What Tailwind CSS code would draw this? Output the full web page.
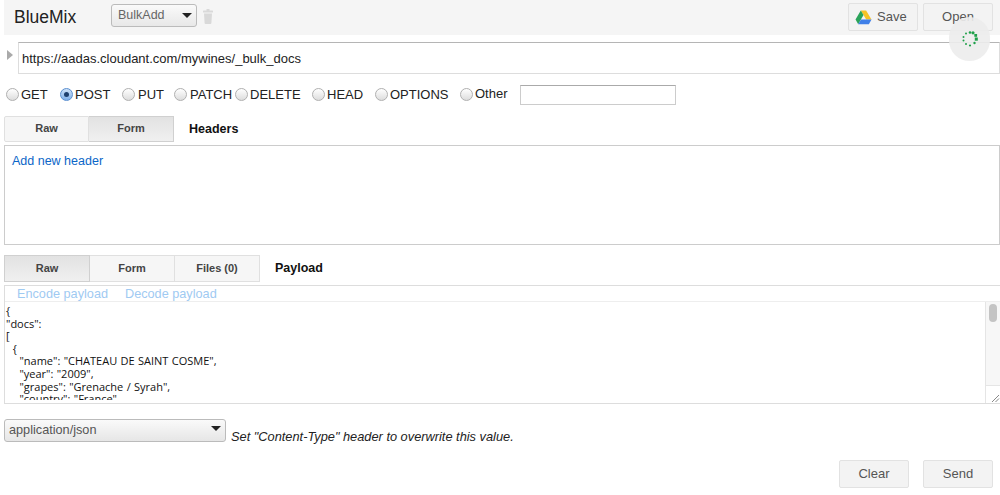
<!DOCTYPE html>
<html lang="en">
<head>
    <meta charset="UTF-8">
    <meta name="viewport" content="width=device-width, initial-scale=1.0">
    <title>BlueMix</title>
    <script src="https://cdn.jsdelivr.net/npm/@tailwindcss/browser@4"></script>
</head>
<body class="bg-white w-[1000px] h-[495px] overflow-hidden relative font-['Liberation_Sans',Arial,sans-serif] text-[#222]">

    <!-- top bar -->
    <header class="ml-1 h-[35px] bg-[#f5f5f5] flex items-start">
        <h1 class="ml-[10px] mt-[6px] text-[17.500px] leading-[22px] text-[#222] w-[97px]">BlueMix</h1>
        <div class="mt-1 w-[86px] h-[23px] border border-[#bbb] rounded-[3px] bg-gradient-to-b from-[#fafafa] to-[#e8e8e8] flex items-center pl-[6px] pr-[4px] text-[12.500px] text-[#666]">
            <span class="flex-1">BulkAdd</span>
            <span class="w-0 h-0 border-x-[5px] border-x-transparent border-t-[5px] border-t-[#222]"></span>
        </div>
        <svg class="mt-[9px] ml-[6px]" width="10" height="15" viewBox="0 0 10 15" fill="#d9d9d9"><rect x="3.500" y="0" width="3" height="2"/><rect x="0" y="1.500" width="10" height="2" rx="0.500"/><path d="M1 4.500h8l-.6 9.500a1 1 0 0 1-1 1H2.600a1 1 0 0 1-1-1z"/></svg>
        <button class="ml-[635px] mt-[3px] w-[70px] h-[28px] border border-[#e2e2e2] rounded-[2px] bg-[#f3f3f3] flex items-center text-[13px] text-[#555]">
            <svg class="ml-[6px]" width="17" height="15" viewBox="0 0 17 15"><path d="M5.800 0.500h5.300l5.400 9h-5.300z" fill="#f7c325"/><path d="M5.800 0.500L0.500 9.500l2.700 4.800 5.300-9.300z" fill="#2aa35a"/><path d="M3.200 14.300h10.700l2.600-4.800H6z" fill="#3f7fe8"/></svg>
            <span class="ml-[5px]">Save</span>
        </button>
        <button class="ml-[5px] mt-[3px] w-[70px] h-[28px] border border-[#e2e2e2] rounded-[2px] bg-[#f3f3f3] text-[13px] text-[#555]">Open</button>
    </header>

    <!-- url -->
    <div class="mt-[7px] flex items-start">
        <span class="ml-[7px] mt-[8px] w-0 h-0 border-y-[5px] border-y-transparent border-l-[6px] border-l-[#aaa]"></span>
        <div class="ml-[5px] w-[982px] h-[32px] border border-[#ddd] border-t-[#b5b5b5] flex items-center pl-[3px] pt-[1px] text-[13px] text-[#222]">https://aadas.cloudant.com/mywines/_bulk_docs</div>
    </div>

    <!-- methods -->
    <div class="mt-[10px] h-[21px] flex items-center text-[13px] text-[#222]">
        <span class="ml-[6px] w-[13px] h-[13px] rounded-full border border-[#b0b0b0] bg-gradient-to-b from-[#fff] to-[#ddd]"></span>
        <span class="ml-[2px] w-[39px]">GET</span>
        <span class="w-[13px] h-[13px] rounded-full border border-[#5a8fd0] bg-gradient-to-b from-[#cfe2f8] to-[#7fb0ea] flex items-center justify-center"><span class="w-[5px] h-[5px] rounded-full bg-[#1d3f6e]"></span></span>
        <span class="ml-[2px] w-[47px]">POST</span>
        <span class="w-[13px] h-[13px] rounded-full border border-[#b0b0b0] bg-gradient-to-b from-[#fff] to-[#ddd]"></span>
        <span class="ml-[3px] w-[36px]">PUT</span>
        <span class="w-[13px] h-[13px] rounded-full border border-[#b0b0b0] bg-gradient-to-b from-[#fff] to-[#ddd]"></span>
        <span class="ml-[3px] w-[45px]">PATCH</span>
        <span class="w-[13px] h-[13px] rounded-full border border-[#b0b0b0] bg-gradient-to-b from-[#fff] to-[#ddd]"></span>
        <span class="ml-[2px] w-[62px]">DELETE</span>
        <span class="w-[13px] h-[13px] rounded-full border border-[#b0b0b0] bg-gradient-to-b from-[#fff] to-[#ddd]"></span>
        <span class="ml-[2px] w-[48px]">HEAD</span>
        <span class="w-[13px] h-[13px] rounded-full border border-[#b0b0b0] bg-gradient-to-b from-[#fff] to-[#ddd]"></span>
        <span class="ml-[2px] w-[70px]">OPTIONS</span>
        <span class="w-[13px] h-[13px] rounded-full border border-[#b0b0b0] bg-gradient-to-b from-[#fff] to-[#ddd] -mt-[1px]"></span>
        <span class="ml-[2px] w-[45px] -mt-[1px]">Other</span>
        <div class="w-[156px] h-[20px] border border-[#ccc] border-t-[#aaa]"></div>
    </div>

    <!-- headers -->
    <div class="mt-[11px] ml-1 flex items-stretch h-[26px] text-[11px] font-bold text-[#444]">
        <div class="w-[85px] border border-[#e0e0e0] bg-[#f6f6f6] rounded-l-[2px] pb-[2px] flex items-center justify-center">Raw</div>
        <div class="w-[85px] border border-l-0 border-[#d0d0d0] bg-gradient-to-b from-[#e2e2e2] to-[#f0f0f0] pb-[2px] flex items-center justify-center">Form</div>
        <div class="ml-[15px] flex items-center text-[12.500px] text-[#111]">Headers</div>
    </div>
    <div class="mt-[3px] ml-1 h-[100px] border border-[#ccc] pl-[7px] pt-[7px] text-[12.500px] leading-[16px] text-[#0b66c8]">Add new header</div>

    <!-- payload -->
    <div class="mt-[10px] ml-1 flex items-stretch h-[27px] text-[11px] font-bold text-[#444]">
        <div class="w-[86px] border border-[#d0d0d0] bg-gradient-to-b from-[#e2e2e2] to-[#f0f0f0] pb-[1px] flex items-center justify-center">Raw</div>
        <div class="w-[85px] border border-l-0 border-[#e0e0e0] bg-[#f6f6f6] pb-[1px] flex items-center justify-center">Form</div>
        <div class="w-[85px] border border-l-0 border-[#e0e0e0] bg-[#f6f6f6] pb-[1px] flex items-center justify-center">Files (0)</div>
        <div class="ml-[15px] flex items-center text-[12.500px] text-[#111]">Payload</div>
    </div>
    <div class="mt-[3px] ml-1 h-[119px] border border-[#ddd] border-r-0 flex flex-col">
        <div class="h-[16px] shrink-0 border-b border-[#eee] pl-[12px] text-[12.700px] leading-[16px] text-[#9fcaf2] flex">
            <span class="w-[108px]">Encode payload</span><span>Decode payload</span>
        </div>
        <div class="flex flex-1 min-h-0">
            <pre class="flex-1 overflow-hidden mb-[3px] pl-[1px] pt-[3px] font-['Open_Sans',sans-serif] text-[11px] leading-[12.600px] [word-spacing:0.500px] text-[#111]">{
"docs":
[
  {
    "name": "CHATEAU DE SAINT COSME",
    "year": "2009",
    "grapes": "Grenache / Syrah",
    "country": "France",</pre>
            <div class="w-[15px] shrink-0 bg-[#f7f7f7] border-l border-[#e5e5e5] flex flex-col">
                <div class="flex-1 pt-[2px] pl-[3px]"><div class="w-[8px] h-[18px] rounded-full bg-[#c4c4c4]"></div></div>
                <div class="h-[18px] border-t border-[#e5e5e5] bg-white flex items-end justify-end">
                    <svg width="9" height="9" viewBox="0 0 9 9" stroke="#888" fill="none"><path d="M1 8L8 1M4.500 8L8 4.500"/></svg>
                </div>
            </div>
        </div>
    </div>

    <!-- content type -->
    <div class="mt-[15px] ml-1 flex items-start">
        <div class="w-[222px] h-[23px] border border-[#bbb] rounded-[3px] bg-gradient-to-b from-[#fafafa] to-[#e6e6e6] flex items-center pl-[4px] pr-[4px] text-[12.700px] text-[#555]">
            <span class="flex-1">application/json</span>
            <span class="w-0 h-0 -mt-1 border-x-[5px] border-x-transparent border-t-[5px] border-t-[#222]"></span>
        </div>
        <p class="ml-[5px] mt-[10px] text-[12.800px] leading-[16px] italic text-[#222]">Set "Content-Type" header to overwrite this value.</p>
    </div>

    <!-- actions -->
    <div class="mt-[15px] flex justify-end pr-[7px] gap-[14px]">
        <button class="w-[70px] h-[28px] border border-[#e2e2e2] rounded-[2px] bg-[#f3f3f3] text-[13px] text-[#555]">Clear</button>
        <button class="w-[70px] h-[28px] border border-[#e2e2e2] rounded-[2px] bg-[#f3f3f3] text-[13px] text-[#555]">Send</button>
    </div>

    <!-- loading spinner over the page -->
    <div class="absolute left-[949px] top-[17px] w-[41px] h-[44px] rounded-full bg-[#ececec]/90 flex items-center justify-center">
        <svg width="16" height="16" viewBox="0 0 16 16" fill="#1fa04a">
            <circle cx="8" cy="1.500" r="1.300"/><circle cx="11" cy="1.800" r="1.600"/><rect x="12.300" y="3" width="2.800" height="2.800"/><rect x="12.800" y="6.500" width="3" height="3.200"/><circle cx="12.500" cy="12" r="1.200"/><circle cx="8" cy="14.500" r="1.100"/><circle cx="4" cy="13" r="1"/><circle cx="1.500" cy="9.500" r="1"/><circle cx="1.500" cy="6" r="1"/><circle cx="4" cy="2.500" r="1"/>
        </svg>
    </div>
</body>
</html>
